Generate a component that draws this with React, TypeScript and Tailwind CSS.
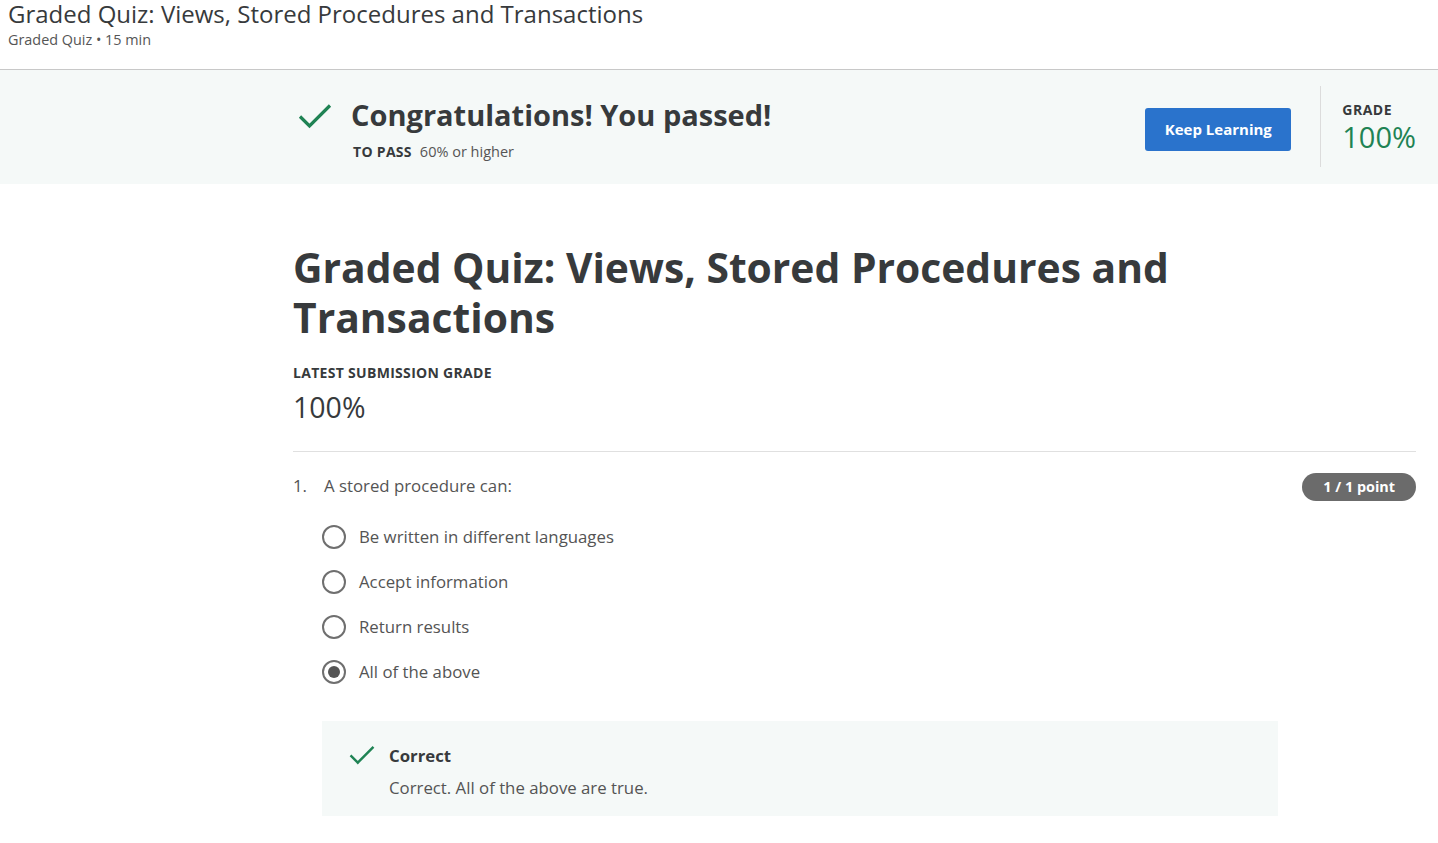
const font = { fontFamily: '"Open Sans", "Liberation Sans", sans-serif' };

const Check = ({ className }: { className?: string }) => (
  <svg viewBox="0 0 34 26" className={className} fill="none">
    <path d="M2 13.5 L11.5 23 L32 2.5" stroke="#1f8354" strokeWidth="3.2" />
  </svg>
);

const Radio = ({ checked }: { checked?: boolean }) => (
  <div className="w-6 h-6 rounded-full border-2 border-[#6f6f6f] flex items-center justify-center shrink-0">
    {checked && <div className="w-3 h-3 rounded-full bg-[#555]" />}
  </div>
);

const options = [
  "Be written in different languages",
  "Accept information",
  "Return results",
  "All of the above",
];

export default function App() {
  return (
    <div className="min-h-screen bg-white text-[#373a3c]" style={font}>
      {/* top header */}
      <div className="h-[70px] border-b border-[#c8c8c8] px-2 pt-[2px]">
        <div className="text-[24px] leading-6 text-[#373a3c]">
          Graded Quiz: Views, Stored Procedures and Transactions
        </div>
        <div className="mt-[4px] text-[14.4px] leading-5 text-[#555]">
          Graded Quiz • 15 min
        </div>
      </div>

      {/* pass banner */}
      <div className="bg-[#f5f9f8] h-[114px] pt-4">
        <div className="ml-[293px] w-[1123px] flex justify-between">
          <div className="flex pl-[5px] pt-[13px]">
            <Check className="w-[34px] h-[26px] mt-[4px]" />
            <div className="ml-[19px]">
              <div className="text-[29px] leading-[32px] font-bold text-[#373a3c]">
                Congratulations! You passed!
              </div>
              <div className="mt-[11px] flex items-baseline text-[14.5px] leading-5">
                <span className="font-bold text-[14px] tracking-[0.3px] ml-[2px]">TO PASS</span>
                <span className="ml-2 text-[#555]">60% or higher</span>
              </div>
            </div>
          </div>
          <div className="flex">
            <button className="mt-[22px] h-[43px] w-[146px] rounded-[3px] bg-[#2a73cc] text-white text-[15px] font-bold">
              Keep Learning
            </button>
            <div className="ml-[29px] w-px h-[81px] bg-[#dcdcdc]" />
            <div className="pl-[21px] pt-[16px]">
              <div className="text-[14px] leading-4 font-bold tracking-[0.5px]">GRADE</div>
              <div className="text-[29px] leading-[36px] text-[#1f8354] mt-[1px]">100%</div>
            </div>
          </div>
        </div>
      </div>

      {/* main */}
      <div className="ml-[293px] w-[1123px] pt-[58px]">
        <h1 className="text-[40.8px] leading-[50px] font-bold text-[#373a3c] pr-[200px]">
          Graded Quiz: Views, Stored Procedures and Transactions
        </h1>
        <div className="mt-[23px] text-[14px] leading-4 font-bold tracking-[0.3px]">
          LATEST SUBMISSION GRADE
        </div>
        <div className="mt-[8px] text-[28.5px] leading-[36px] text-[#373a3c]">100%</div>
        <div className="mt-[26px] h-px bg-[#e0e0e0]" />

        <div className="mt-[21px] flex justify-between items-start">
          <div className="flex text-[16.8px] leading-6 text-[#545454] pt-[1px]">
            <span className="w-[31px]">1.</span>
            <span>A stored procedure can:</span>
          </div>
          <span className="rounded-full bg-[#6b6b6b] text-white text-[14.4px] font-bold h-[28px] px-[21px] flex items-center">
            1 / 1 point
          </span>
        </div>

        <div className="ml-[29px] mt-[24px] flex flex-col gap-[21px]">
          {options.map((o, i) => (
            <div key={o} className="flex items-center gap-[13px]">
              <Radio checked={i === 3} />
              <span className="text-[16.8px] leading-6 text-[#545454]">{o}</span>
            </div>
          ))}
        </div>

        <div className="ml-[29px] mt-[37px] w-[956px] h-[95px] bg-[#f5f9f8] flex pl-[27px] pt-[24px]">
          <Check className="w-[26px] h-[20px]" />
          <div className="ml-[14px]">
            <div className="text-[16.8px] leading-6 font-bold text-[#373a3c] mt-[-1px]">Correct</div>
            <div className="text-[16.8px] leading-6 text-[#545454] mt-[8px]">
              Correct. All of the above are true.
            </div>
          </div>
        </div>
      </div>
    </div>
  );
}
